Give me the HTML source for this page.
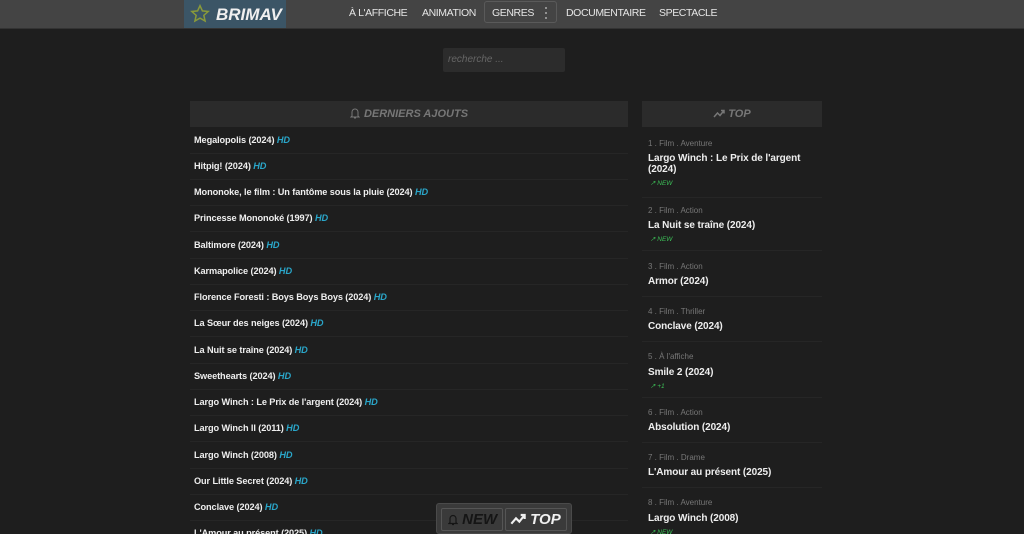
<!DOCTYPE html>
<html><head><meta charset="utf-8">
<style>
*{margin:0;padding:0;box-sizing:border-box}
html,body{width:1024px;height:534px;overflow:hidden}
body{background:#1e1e1e;font-family:"Liberation Sans",Arial,sans-serif;position:relative;color:#eee}
.hdr{position:absolute;left:0;top:0;width:1024px;height:29px;background:#444;border-bottom:1px solid #333}
.logo{position:absolute;left:184px;top:0;width:102px;height:28px;background:#3b5566}
.logo span{position:absolute;left:32px;top:5px;font-size:17px;font-weight:bold;font-style:italic;color:#f0f0f0}
.nav{position:absolute;top:7px;font-size:10.5px;color:#e6e6e6;letter-spacing:-0.4px}
.genres{position:absolute;left:484px;top:1px;width:73px;height:22px;border:1px solid #5a5a5a;border-radius:3px}
.search{position:absolute;left:443px;top:48px;width:122px;height:24px;background:#2c2c2c;border-radius:2px;font-size:10px;font-style:italic;color:#666;padding:6px 5px}
.panel{position:absolute;top:101px;height:26px;background:#2b2b2b;font-size:11px;font-weight:bold;font-style:italic;color:#777;text-align:center;line-height:26px}
.row{position:absolute;left:194px;font-size:9.2px;font-weight:bold;color:#eee;letter-spacing:-0.1px}
.sep{position:absolute;left:190px;width:438px;height:1px;background:#262626}
.hd{color:#2aa6c9;font-style:italic}
.meta{position:absolute;left:648px;font-size:8px;color:#777}
.tt{position:absolute;left:648px;width:170px;font-size:10px;font-weight:bold;color:#eee;line-height:11px;letter-spacing:-0.1px}
.new{position:absolute;left:650px;font-size:6.5px;color:#3cbf57;font-style:italic}
.rsep{position:absolute;left:642px;width:180px;height:1px;background:#262626}
.btm{position:absolute;left:436px;top:503px;width:136px;height:31px;background:#3a3a3a;border:1px solid #4a4a4a;border-radius:3px}
.b{position:absolute;top:4px;height:23px;border:1px solid #555;border-radius:2px;font-size:15px;font-weight:bold;font-style:italic;line-height:21px}
</style></head><body>
<div class="hdr">
 <div class="logo">
  <svg style="position:absolute;left:6px;top:4px" width="20" height="20" viewBox="0 0 24 24"><path d="M12 2l2.9 6.3 6.9.7-5.2 4.6 1.5 6.8L12 16.9 5.9 20.4l1.5-6.8L2.2 9l6.9-.7z" fill="none" stroke="#8a9a3a" stroke-width="1.8"/></svg>
  <span>BRIMAV</span>
 </div>
 <div class="nav" style="left:349px">À L'AFFICHE</div>
 <div class="nav" style="left:422px">ANIMATION</div>
 <div class="genres"></div>
 <div class="nav" style="left:492px">GENRES</div>
 <svg style="position:absolute;left:544px;top:6px" width="4" height="14"><circle cx="2" cy="2" r="1" fill="#aaa"/><circle cx="2" cy="7" r="1" fill="#aaa"/><circle cx="2" cy="12" r="1" fill="#aaa"/></svg>
 <div class="nav" style="left:566px">DOCUMENTAIRE</div>
 <div class="nav" style="left:659px">SPECTACLE</div>
</div>
<div class="search">recherche ...</div>
<div class="panel" style="left:190px;width:438px">
 <svg style="vertical-align:-2px;margin-right:4px" width="10" height="12" viewBox="0 0 10 12"><path d="M2 9V5a3 3 0 016 0v4l1 1H1z M4 11h2" fill="none" stroke="#777" stroke-width="1"/></svg>DERNIERS AJOUTS</div>
<div class="panel" style="left:642px;width:180px">
 <svg style="vertical-align:-1px;margin-right:3px" width="12" height="9" viewBox="0 0 12 9"><path d="M1 8l3.5-4 2.5 2.5L11 1.5M8 1.5h3v3" fill="none" stroke="#777" stroke-width="1.5"/></svg>TOP</div>

<div class="row" style="top:135px">Megalopolis (2024) <span class="hd">HD</span></div>
<div class="row" style="top:161px">Hitpig! (2024) <span class="hd">HD</span></div>
<div class="row" style="top:187px">Mononoke, le film : Un fantôme sous la pluie (2024) <span class="hd">HD</span></div>
<div class="row" style="top:213px">Princesse Mononoké (1997) <span class="hd">HD</span></div>
<div class="row" style="top:240px">Baltimore (2024) <span class="hd">HD</span></div>
<div class="row" style="top:266px">Karmapolice (2024) <span class="hd">HD</span></div>
<div class="row" style="top:292px">Florence Foresti : Boys Boys Boys (2024) <span class="hd">HD</span></div>
<div class="row" style="top:318px">La Sœur des neiges (2024) <span class="hd">HD</span></div>
<div class="row" style="top:345px">La Nuit se traîne (2024) <span class="hd">HD</span></div>
<div class="row" style="top:371px">Sweethearts (2024) <span class="hd">HD</span></div>
<div class="row" style="top:397px">Largo Winch : Le Prix de l'argent (2024) <span class="hd">HD</span></div>
<div class="row" style="top:423px">Largo Winch II (2011) <span class="hd">HD</span></div>
<div class="row" style="top:450px">Largo Winch (2008) <span class="hd">HD</span></div>
<div class="row" style="top:476px">Our Little Secret (2024) <span class="hd">HD</span></div>
<div class="row" style="top:502px">Conclave (2024) <span class="hd">HD</span></div>
<div class="row" style="top:528px">L'Amour au présent (2025) <span class="hd">HD</span></div>
<div class="sep" style="top:153px"></div><div class="sep" style="top:179px"></div><div class="sep" style="top:205px"></div><div class="sep" style="top:231px"></div><div class="sep" style="top:258px"></div><div class="sep" style="top:284px"></div><div class="sep" style="top:310px"></div><div class="sep" style="top:336px"></div><div class="sep" style="top:363px"></div><div class="sep" style="top:389px"></div><div class="sep" style="top:415px"></div><div class="sep" style="top:441px"></div><div class="sep" style="top:468px"></div><div class="sep" style="top:494px"></div><div class="sep" style="top:520px"></div>

<div class="meta" style="top:139px">1 . Film . Aventure</div>
<div class="tt" style="top:153px">Largo Winch : Le Prix de l'argent (2024)</div>
<div class="new" style="top:179px">↗ NEW</div>
<div class="rsep" style="top:197px"></div>
<div class="meta" style="top:206px">2 . Film . Action</div>
<div class="tt" style="top:220px">La Nuit se traîne (2024)</div>
<div class="new" style="top:235px">↗ NEW</div>
<div class="rsep" style="top:250px"></div>
<div class="meta" style="top:262px">3 . Film . Action</div>
<div class="tt" style="top:276px">Armor (2024)</div>
<div class="rsep" style="top:296px"></div>
<div class="meta" style="top:307px">4 . Film . Thriller</div>
<div class="tt" style="top:321px">Conclave (2024)</div>
<div class="rsep" style="top:341px"></div>
<div class="meta" style="top:352px">5 . À l'affiche</div>
<div class="tt" style="top:367px">Smile 2 (2024)</div>
<div class="new" style="top:382px">↗ +1</div>
<div class="rsep" style="top:397px"></div>
<div class="meta" style="top:408px">6 . Film . Action</div>
<div class="tt" style="top:422px">Absolution (2024)</div>
<div class="rsep" style="top:442px"></div>
<div class="meta" style="top:453px">7 . Film . Drame</div>
<div class="tt" style="top:467px">L'Amour au présent (2025)</div>
<div class="rsep" style="top:487px"></div>
<div class="meta" style="top:498px">8 . Film . Aventure</div>
<div class="tt" style="top:513px">Largo Winch (2008)</div>
<div class="new" style="top:528px">↗ NEW</div>

<div class="btm">
 <div class="b" style="left:4px;width:62px;color:#151515;padding-left:6px">
  <svg style="vertical-align:-2px" width="10" height="13" viewBox="0 0 10 12"><path d="M2 9V5a3 3 0 016 0v4l1 1H1z M4 11h2" fill="none" stroke="#151515" stroke-width="1.2"/></svg> NEW</div>
 <div class="b" style="left:68px;width:62px;color:#f0f0f0;padding-left:4px">
  <svg style="vertical-align:-1px" width="16" height="12" viewBox="0 0 12 9"><path d="M1 8l3.5-4 2.5 2.5L11 1.5M8 1.5h3v3" fill="none" stroke="#f0f0f0" stroke-width="1.6"/></svg> TOP</div>
</div>
</body></html>
